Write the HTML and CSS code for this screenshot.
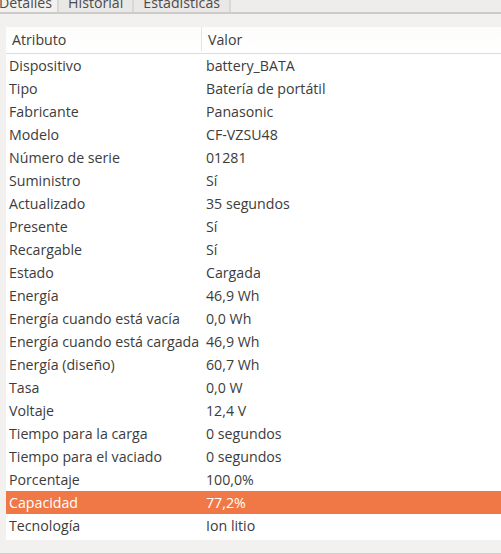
FILE: index.html
```html
<!DOCTYPE html>
<html lang="es">
<head>
<meta charset="utf-8">
<link rel="stylesheet" href="styles.css">
</head>
<body>
<div class="tabs">
  <div class="tab tab-active">Detalles</div>
  <div class="tab">Historial</div>
  <div class="tab">Estadísticas</div>
  <div class="tab-fill"></div>
</div>
<div class="panel">
  <div class="table">
    <div class="row head"><div class="c1">Atributo</div><div class="c2">Valor</div></div>
    <div class="row"><div class="c1">Dispositivo</div><div class="c2">battery_BATA</div></div>
    <div class="row"><div class="c1">Tipo</div><div class="c2">Batería de portátil</div></div>
    <div class="row"><div class="c1">Fabricante</div><div class="c2">Panasonic</div></div>
    <div class="row"><div class="c1">Modelo</div><div class="c2">CF-VZSU48</div></div>
    <div class="row"><div class="c1">Número de serie</div><div class="c2">01281</div></div>
    <div class="row"><div class="c1">Suministro</div><div class="c2">Sí</div></div>
    <div class="row"><div class="c1">Actualizado</div><div class="c2">35 segundos</div></div>
    <div class="row"><div class="c1">Presente</div><div class="c2">Sí</div></div>
    <div class="row"><div class="c1">Recargable</div><div class="c2">Sí</div></div>
    <div class="row"><div class="c1">Estado</div><div class="c2">Cargada</div></div>
    <div class="row"><div class="c1">Energía</div><div class="c2">46,9 Wh</div></div>
    <div class="row"><div class="c1">Energía cuando está vacía</div><div class="c2">0,0 Wh</div></div>
    <div class="row"><div class="c1">Energía cuando está cargada</div><div class="c2">46,9 Wh</div></div>
    <div class="row"><div class="c1">Energía (diseño)</div><div class="c2">60,7 Wh</div></div>
    <div class="row"><div class="c1">Tasa</div><div class="c2">0,0 W</div></div>
    <div class="row"><div class="c1">Voltaje</div><div class="c2">12,4 V</div></div>
    <div class="row"><div class="c1">Tiempo para la carga</div><div class="c2">0 segundos</div></div>
    <div class="row"><div class="c1">Tiempo para el vaciado</div><div class="c2">0 segundos</div></div>
    <div class="row"><div class="c1">Porcentaje</div><div class="c2">100,0%</div></div>
    <div class="row selected"><div class="c1">Capacidad</div><div class="c2">77,2%</div></div>
    <div class="row"><div class="c1">Tecnología</div><div class="c2">Ion litio</div></div>
  </div>
</div>
<div class="bottom-line"></div>
</body>
</html>
```

FILE: styles.css
```css
html, body {
  margin: 0;
  padding: 0;
  background: #f2f1f0;
  width: 501px;
  height: 554px;
  overflow: hidden;
  font-family: "Open Sans", "DejaVu Sans", sans-serif;
  font-size: 14.2px;
  color: #3c3c3c;
}
.tabs {
  display: flex;
  height: 12px;
  border-bottom: 2px solid #cbcbc9;
  background: #eeedeb;
  overflow: hidden;
}
.tab {
  height: 12px;
  line-height: 6px;
  box-sizing: border-box;
  padding: 0 9px;
  border-right: 2px solid #d9d8d6;
  white-space: nowrap;
  color: #4c4c4c;
  background: #e9e8e6;
}
.tab-active {
  padding-left: 0;
  padding-right: 5px;
  margin-left: -1px;
  background: #f2f1f0;
}
.tab-fill {
  flex: 1;
}
.panel {
  padding: 13px 0 12px 6px;
  height: 539px;
  box-sizing: border-box;
}
.table {
  background: #ffffff;
  height: 513px;
}
.row {
  display: flex;
  height: 23px;
  align-items: center;
  white-space: nowrap;
}
.c1 {
  width: 196px;
  padding-left: 3px;
  box-sizing: border-box;
}
.c2 {
  padding-left: 4px;
}
.head {
  height: 27px;
  padding-bottom: 2px;
  background: linear-gradient(#fcfcfb, #ffffff);
  border-bottom: 1px solid #dcdcdb;
  box-sizing: border-box;
}
.head .c1 {
  padding-left: 6px;
  align-self: stretch;
  display: flex;
  align-items: center;
  border-right: 1px solid #e4e4e3;
}
.head .c2 {
  padding-left: 6px;
}
.selected {
  background: #f07746;
  color: #ffffff;
}
.bottom-line {
  height: 3px;
  background: #cfcecc;
}
```
